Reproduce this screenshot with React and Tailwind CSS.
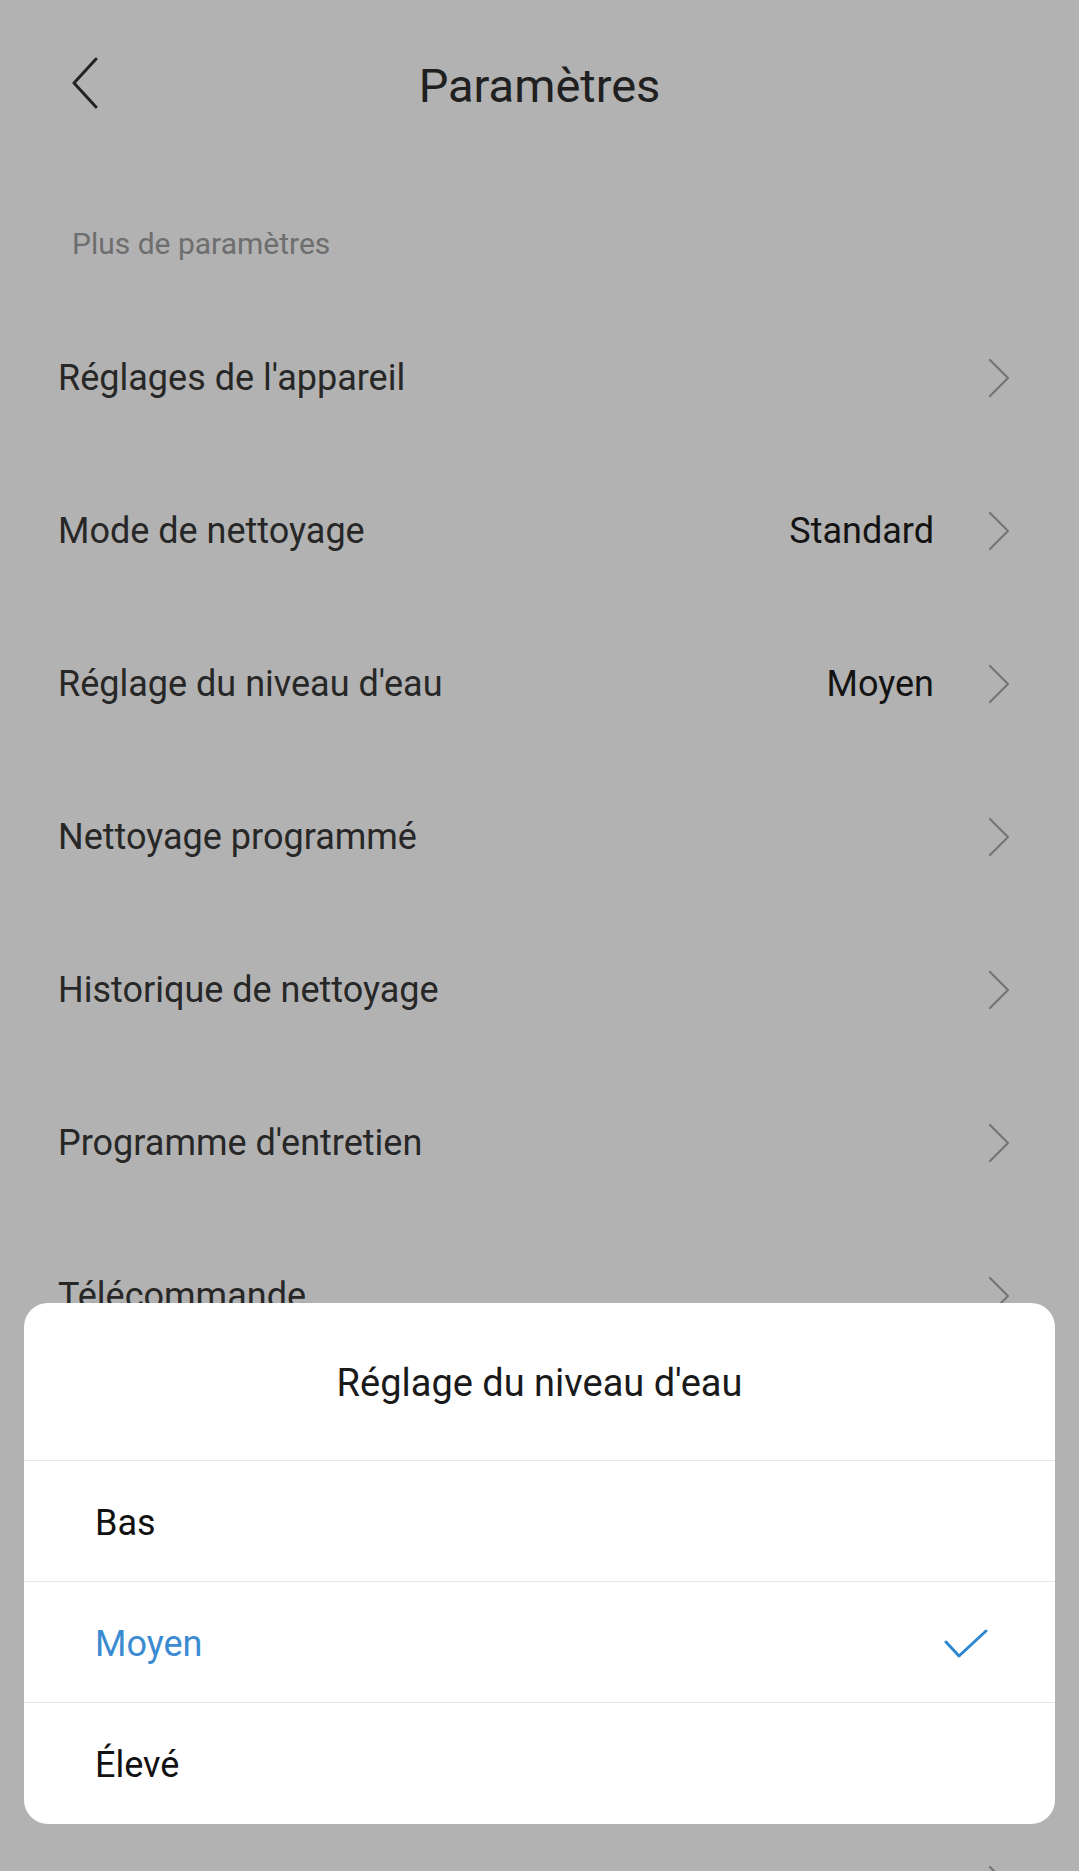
const ROWS = [
  { label: "Réglages de l'appareil" },
  { label: 'Mode de nettoyage', value: 'Standard' },
  { label: "Réglage du niveau d'eau", value: 'Moyen' },
  { label: 'Nettoyage programmé' },
  { label: 'Historique de nettoyage' },
  { label: "Programme d'entretien" },
  { label: 'Télécommande' },
  { label: 'Ne pas déranger' },
  { label: 'Volume vocal' },
]

const OPTIONS = ['Bas', 'Moyen', 'Élevé']

function Chevron({ className = '' }) {
  return (
    <svg width="22" height="40" viewBox="0 0 22 40" className={className} fill="none">
      <path d="M2 2 L20 20 L2 38" stroke="currentColor" strokeWidth="2.2" strokeLinecap="round" strokeLinejoin="round" />
    </svg>
  )
}

function Row({ label, value, labelClass = '' }) {
  return (
    <div className="flex h-[153px] items-center pl-[58px] pr-[69px]">
      <span className={`flex-1 text-[36px] leading-none text-[#383838] ${labelClass}`}>{label}</span>
      {value && <span className="mr-[54px] text-[36px] leading-none text-[#1c1c1c]">{value}</span>}
      <Chevron className="text-[#a8a8a8]" />
    </div>
  )
}

export default function App() {
  const selected = 'Moyen'

  return (
    <div className="relative h-[1871px] overflow-hidden bg-white font-['Roboto',sans-serif]">
      {/* Header */}
      <div className="relative flex h-[170px] items-center justify-center">
        <button className="absolute left-[70px] top-[57px] text-[#333]">
          <svg width="30" height="52" viewBox="0 0 30 52" fill="none">
            <path d="M26 2 L4 26 L26 50" stroke="currentColor" strokeWidth="3" strokeLinecap="round" strokeLinejoin="round" />
          </svg>
        </button>
        <h1 className="text-[47px] leading-none text-[#2e2e2e]">Paramètres</h1>
      </div>

      {/* Section header */}
      <div className="flex h-[131px] items-start pl-[72px] pt-[59px]">
        <p className="text-[30px] leading-none text-[#9e9e9e]">Plus de paramètres</p>
      </div>

      <div className="flex flex-col">
        {ROWS.map(row => <Row key={row.label} {...row} />)}
      </div>
      <div className="flex h-[130px] items-end pb-[20px] pl-[72px]">
        <p className="text-[30px] leading-none text-[#9e9e9e]">Autres</p>
      </div>
      <Row label="Aide et commentaires" labelClass="pt-[16px]" />

      {/* Dimmed overlay with bottom sheet */}
      <div className="absolute inset-0 flex flex-col justify-end bg-black/30 px-[24px] pb-[47px]">
        <div className="overflow-hidden rounded-[24px] bg-white">
          <div className="flex h-[158px] items-center justify-center border-b border-[#e6e6e6] pt-[2px]">
            <h2 className="text-[38px] leading-none text-[#1a1a1a]">Réglage du niveau d'eau</h2>
          </div>
          {OPTIONS.map((opt, i) => (
            <div
              key={opt}
              className={`flex h-[121px] items-center pl-[71px] pr-[67px] pt-[3px] ${i < OPTIONS.length - 1 ? 'border-b border-[#e6e6e6]' : ''}`}
            >
              <span className={`flex-1 text-[36px] leading-none ${opt === selected ? 'text-[#3b8bd3]' : 'text-[#111]'}`}>
                {opt}
              </span>
              {opt === selected && (
                <svg width="44" height="30" viewBox="0 0 44 30" fill="none" className="text-[#2f87cf]">
                  <path d="M2 13 L15 27 L42 2" stroke="currentColor" strokeWidth="3" strokeLinecap="round" strokeLinejoin="round" />
                </svg>
              )}
            </div>
          ))}
        </div>
      </div>
    </div>
  )
}
